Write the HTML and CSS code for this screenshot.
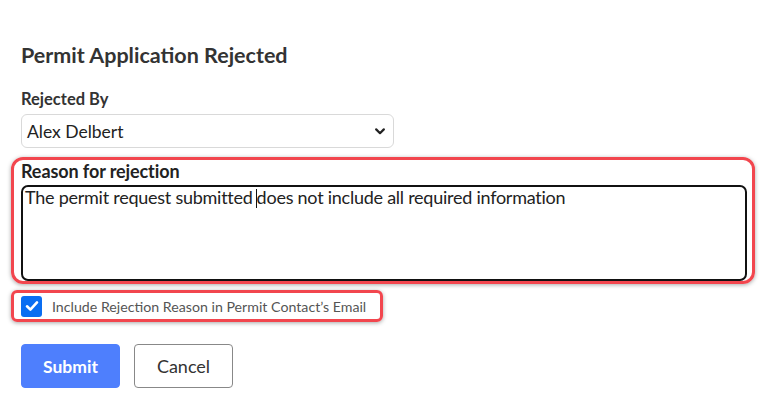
FILE: index.html
```html
<!DOCTYPE html>
<html>
<head>
<meta charset="utf-8">
<link rel="stylesheet" href="styles.css">
</head>
<body>
<div class="page">
  <h2 class="title">Permit Application Rejected</h2>
  <div class="field">
    <label class="label">Rejected By</label>
    <div class="select">
      <span>Alex Delbert</span>
      <svg class="chev" width="10" height="7" viewBox="0 0 10 7"><path d="M1.2 1.4 L5 5.2 L8.8 1.4" fill="none" stroke="#222" stroke-width="2.2" stroke-linecap="round" stroke-linejoin="round"/></svg>
    </div>
  </div>
  <div class="highlight reason">
    <label class="label condensed">Reason for rejection</label>
    <div class="textarea"><span class="condensed-text">The permit request submitted<span class="caret"></span>does not include all required information</span></div>
  </div>
  <div class="highlight check">
    <span class="box">
      <svg width="14" height="12" viewBox="0 0 14 12"><path d="M2 6.3 L5.4 9.6 L12 2.4" fill="none" stroke="#fff" stroke-width="2.6" stroke-linecap="round" stroke-linejoin="round"/></svg>
    </span>
    <span class="check-label">Include Rejection Reason in Permit Contact’s Email</span>
  </div>
  <div class="actions">
    <button class="btn primary">Submit</button>
    <button class="btn secondary">Cancel</button>
  </div>
</div>
</body>
</html>
```
FILE: styles.css
```css
html, body {
  margin: 0;
  padding: 0;
  background: #fff;
}
body {
  font-family: Lato, "Open Sans", sans-serif;
  color: #333;
}
.page {
  padding: 43px 0 0 21px;
  width: 726px;
}
.title {
  margin: 0;
  font-size: 21.5px;
  line-height: 24px;
  font-weight: 700;
  color: #333;
}
.field {
  margin-top: 22px;
}
.label {
  display: block;
  font-size: 16.5px;
  line-height: 20px;
  font-weight: 700;
  color: #333;
}
.select {
  margin-top: 5px;
  width: 373px;
  height: 34px;
  box-sizing: border-box;
  border: 1px solid #d9d9d9;
  border-radius: 6px;
  display: flex;
  align-items: center;
  justify-content: space-between;
  padding: 0 8px 0 5px;
  font-size: 17.5px;
  color: #222;
}
.chev { display: block; }
.highlight {
  border: 3px solid #f2464e;
  box-shadow: 0 1px 4px rgba(0, 0, 0, 0.35);
  box-sizing: border-box;
}
.reason {
  margin: 9px 0 0 -10px;
  width: 744px;
  height: 127px;
  border-radius: 12px;
  padding: 1px 5px 0 7px;
}
.condensed {
  font-size: 18px;
  letter-spacing: -0.1px;
  color: #222;
}
.textarea {
  margin-top: 4px;
  height: 96px;
  box-sizing: border-box;
  border: 2px solid #111;
  border-radius: 7px;
  padding: 0 0 0 2px;
  font-size: 18px;
  line-height: 21px;
  color: #222;
}
.condensed-text { letter-spacing: -0.25px; }
.caret {
  display: inline-block;
  width: 1px;
  height: 19px;
  background: #111;
  vertical-align: -4px;
  margin: 0 0 0 3px;
}
.check {
  margin: 6px 0 0 -10px;
  width: 372px;
  height: 32px;
  border-radius: 6px;
  display: flex;
  align-items: center;
  padding-left: 7px;
}
.box {
  width: 21px;
  height: 21px;
  border-radius: 3px;
  background: #0a6ef2;
  display: flex;
  align-items: center;
  justify-content: center;
}
.check-label {
  margin-left: 10px;
  font-size: 14.2px;
  color: #555;
}
.actions {
  margin-top: 22px;
  display: flex;
  gap: 14px;
}
.btn {
  width: 99px;
  height: 44px;
  border-radius: 4px;
  font-family: Lato, "Open Sans", sans-serif;
  font-size: 17.5px;
  box-sizing: border-box;
  cursor: pointer;
}
.primary {
  background: #4e7ffd;
  border: 1px solid #4e7ffd;
  color: #fff;
  font-weight: 700;
}
.secondary {
  background: #fff;
  border: 1px solid #888;
  color: #333;
  font-size: 18px;
}
```
